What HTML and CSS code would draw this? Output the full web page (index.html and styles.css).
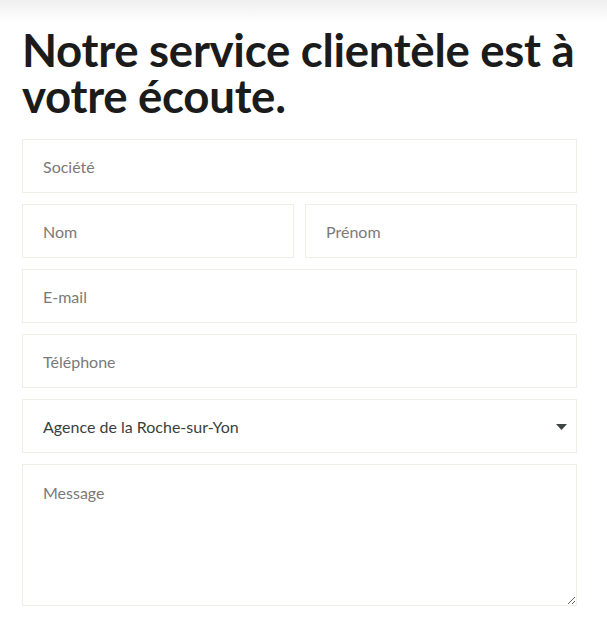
FILE: index.html
```html
<!DOCTYPE html>
<html lang="fr">
<head>
<meta charset="utf-8">
<title>Contact</title>
<link rel="stylesheet" href="styles.css">
</head>
<body>
<div class="topshade"></div>
<main class="wrap">
  <h1 class="title">Notre service clientèle est à votre écoute.</h1>
  <form class="form">
    <input class="field" type="text" placeholder="Société">
    <div class="row">
      <input class="field" type="text" placeholder="Nom">
      <input class="field" type="text" placeholder="Prénom">
    </div>
    <input class="field" type="email" placeholder="E-mail">
    <input class="field" type="tel" placeholder="Téléphone">
    <div class="selectbox">
      <select class="field select">
        <option>Agence de la Roche-sur-Yon</option>
      </select>
      <svg class="arrow" width="11" height="6" viewBox="0 0 11 6"><path d="M0 0H11L5.5 6Z" fill="#3d4642"/></svg>
    </div>
    <textarea class="field area" placeholder="Message"></textarea>
  </form>
</main>
</body>
</html>
```
FILE: styles.css
```css
html, body {
  margin: 0;
  padding: 0;
  background: #fff;
}
body {
  font-family: "Lato", "Noto Sans", sans-serif;
  color: #222;
}
.topshade {
  height: 22px;
  background: linear-gradient(to bottom, #efefef, #ffffff);
}
.wrap {
  padding: 0 30px 0 22px;
}
.title {
  margin: 5px 0 20px;
  font-size: 45.6px;
  line-height: 46px;
  font-weight: 700;
  color: #1b1b1b;
  letter-spacing: -0.3px;
  width: 570px;
}
.form {
  display: flex;
  flex-direction: column;
  gap: 11px;
  width: 555px;
}
.row {
  display: grid;
  grid-template-columns: 1fr 1fr;
  gap: 11px;
}
.field {
  box-sizing: border-box;
  width: 100%;
  height: 54px;
  margin: 0;
  border: 1px solid #efefea;
  border-radius: 0;
  background: #fff;
  padding: 0 20px;
  font-family: "Lato", "Noto Sans", sans-serif;
  font-size: 16px;
  color: #333;
  outline: none;
}
.field::placeholder {
  color: #7a7a7a;
  opacity: 1;
}
.selectbox {
  position: relative;
}
.select {
  appearance: none;
  -webkit-appearance: none;
  color: #3a3f3c;
}
.arrow {
  position: absolute;
  right: 10px;
  top: 25px;
  pointer-events: none;
}
.area {
  height: 142px;
  padding-top: 18px;
  resize: vertical;
  display: block;
}
```
